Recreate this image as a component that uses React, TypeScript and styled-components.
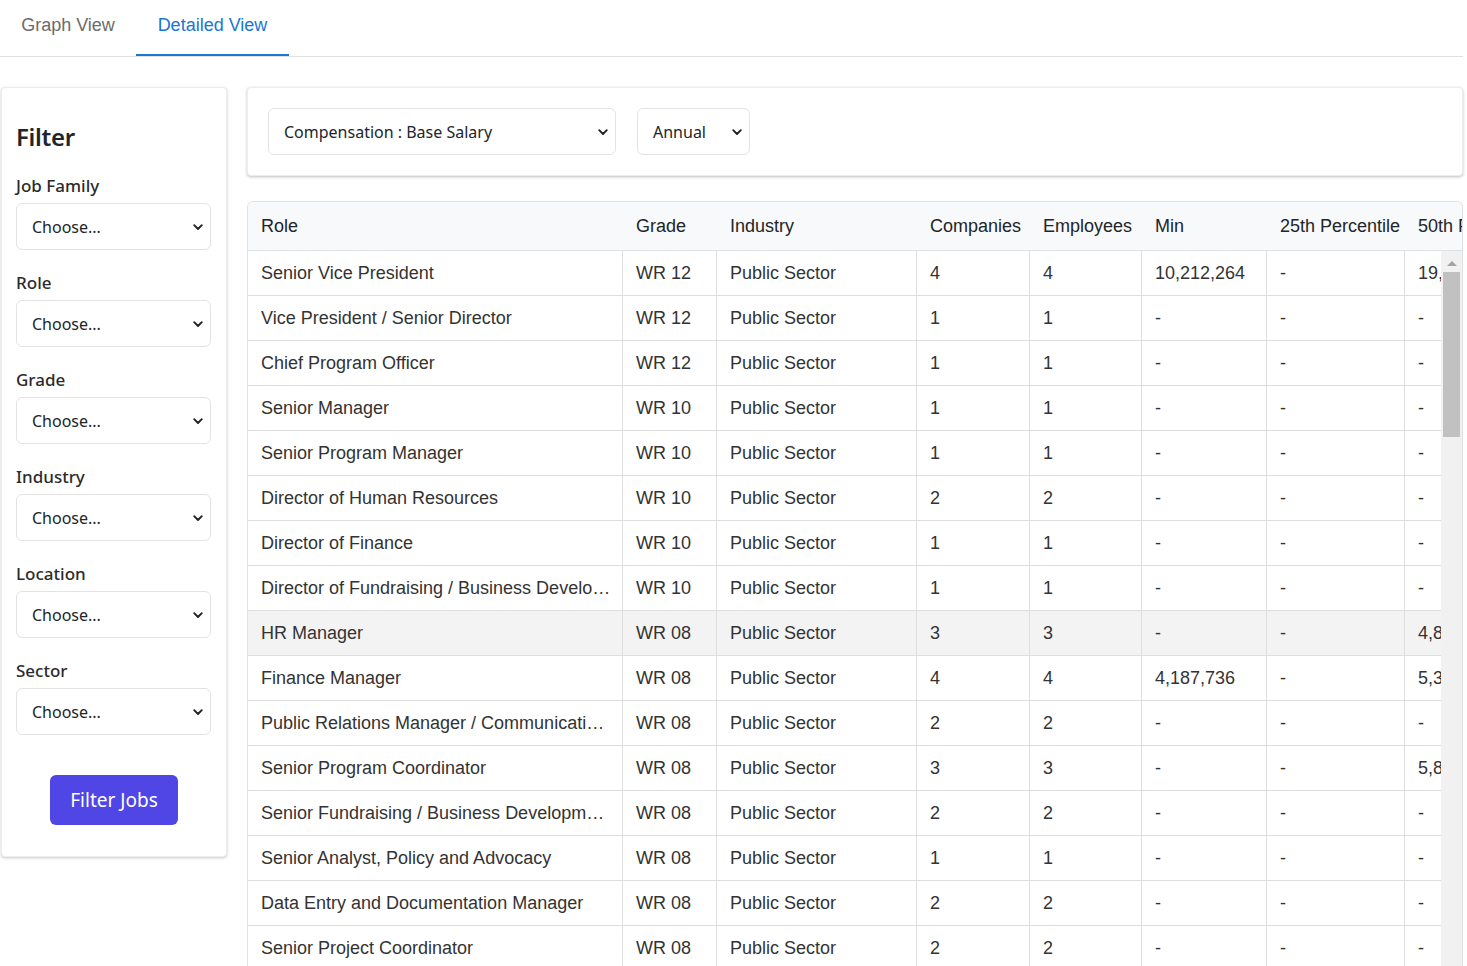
import React from 'react';
import styled, {createGlobalStyle} from 'styled-components';

const GlobalStyle = createGlobalStyle`
    * {
        box-sizing: border-box;
    }
    body {
        margin: 0;
        background: #FFFFFF;
        font-family: "Noto Sans", "Open Sans", sans-serif;
        color: #212529;
    }
`;

type Row = {
    role: string;
    grade: string;
    companies: number;
    employees: number;
    min: string;
    p25: string;
    p50: string;
};

const rows: Row[] = [
    {role: 'Senior Vice President', grade: 'WR 12', companies: 4, employees: 4, min: '10,212,264', p25: '-', p50: '19,650,480'},
    {role: 'Vice President / Senior Director', grade: 'WR 12', companies: 1, employees: 1, min: '-', p25: '-', p50: '-'},
    {role: 'Chief Program Officer', grade: 'WR 12', companies: 1, employees: 1, min: '-', p25: '-', p50: '-'},
    {role: 'Senior Manager', grade: 'WR 10', companies: 1, employees: 1, min: '-', p25: '-', p50: '-'},
    {role: 'Senior Program Manager', grade: 'WR 10', companies: 1, employees: 1, min: '-', p25: '-', p50: '-'},
    {role: 'Director of Human Resources', grade: 'WR 10', companies: 2, employees: 2, min: '-', p25: '-', p50: '-'},
    {role: 'Director of Finance', grade: 'WR 10', companies: 1, employees: 1, min: '-', p25: '-', p50: '-'},
    {role: 'Director of Fundraising / Business Development', grade: 'WR 10', companies: 1, employees: 1, min: '-', p25: '-', p50: '-'},
    {role: 'HR Manager', grade: 'WR 08', companies: 3, employees: 3, min: '-', p25: '-', p50: '4,850,000'},
    {role: 'Finance Manager', grade: 'WR 08', companies: 4, employees: 4, min: '4,187,736', p25: '-', p50: '5,312,400'},
    {role: 'Public Relations Manager / Communications Manager', grade: 'WR 08', companies: 2, employees: 2, min: '-', p25: '-', p50: '-'},
    {role: 'Senior Program Coordinator', grade: 'WR 08', companies: 3, employees: 3, min: '-', p25: '-', p50: '5,820,000'},
    {role: 'Senior Fundraising / Business Development Manager', grade: 'WR 08', companies: 2, employees: 2, min: '-', p25: '-', p50: '-'},
    {role: 'Senior Analyst, Policy and Advocacy', grade: 'WR 08', companies: 1, employees: 1, min: '-', p25: '-', p50: '-'},
    {role: 'Data Entry and Documentation Manager', grade: 'WR 08', companies: 2, employees: 2, min: '-', p25: '-', p50: '-'},
    {role: 'Senior Project Coordinator', grade: 'WR 08', companies: 2, employees: 2, min: '-', p25: '-', p50: '-'},
];

const columns = [
    {label: 'Role', width: 375},
    {label: 'Grade', width: 94},
    {label: 'Industry', width: 200},
    {label: 'Companies', width: 113},
    {label: 'Employees', width: 112},
    {label: 'Min', width: 125},
    {label: '25th Percentile', width: 138},
    {label: '50th Percentile', width: 140},
    {label: '75th Percentile', width: 140},
    {label: 'Max', width: 125},
];

const tableWidth = columns.reduce((sum, c) => sum + c.width, 0);

const Chevron = () => (
    <ChevronIcon viewBox="0 0 12 12" width="12" height="12">
        <path d="M2.2 4.2 L6 8 L9.8 4.2" fill="none" stroke="#222" strokeWidth="1.9" strokeLinecap="round"
              strokeLinejoin="round"/>
    </ChevronIcon>
);

const Select = ({value, width}: { value: string; width?: number }) => (
    <SelectBox $width={width}>
        <SelectText>{value}</SelectText>
        <Chevron/>
    </SelectBox>
);

const filters = ['Job Family', 'Role', 'Grade', 'Industry', 'Location', 'Sector'];

const ColGroup = () => (
    <colgroup>
        {columns.map(c => <col key={c.label} style={{width: c.width}}/>)}
    </colgroup>
);

const App = () => {
    return (
        <>
            <GlobalStyle/>
            <TabBar>
                <Tab>Graph View</Tab>
                <Tab $active>Detailed View</Tab>
            </TabBar>
            <Main>
                <Sidebar>
                    <Heading>Filter</Heading>
                    {filters.map(f => (
                        <Field key={f}>
                            <Label>{f}</Label>
                            <Select value="Choose..."/>
                        </Field>
                    ))}
                    <FilterButton>Filter Jobs</FilterButton>
                </Sidebar>
                <Content>
                    <Toolbar>
                        <Select value="Compensation : Base Salary" width={348}/>
                        <Select value="Annual" width={113}/>
                    </Toolbar>
                    <TableCard>
                        <HeadWrap>
                            <Table style={{width: tableWidth}}>
                                <ColGroup/>
                                <thead>
                                <tr>
                                    {columns.map(c => <Th key={c.label}>{c.label}</Th>)}
                                </tr>
                                </thead>
                            </Table>
                        </HeadWrap>
                        <BodyWrap>
                            <BodyScroll>
                                <Table style={{width: tableWidth}}>
                                    <ColGroup/>
                                    <tbody>
                                    {rows.map((r, i) => (
                                        <Tr key={i} $hover={i === 8}>
                                            <Td>{r.role}</Td>
                                            <Td>{r.grade}</Td>
                                            <Td>Public Sector</Td>
                                            <Td>{r.companies}</Td>
                                            <Td>{r.employees}</Td>
                                            <Td>{r.min}</Td>
                                            <Td>{r.p25}</Td>
                                            <Td>{r.p50}</Td>
                                            <Td>-</Td>
                                            <Td>-</Td>
                                        </Tr>
                                    ))}
                                    </tbody>
                                </Table>
                            </BodyScroll>
                            <ScrollTrack>
                                <ScrollArrow viewBox="0 0 10 6" width="10" height="6">
                                    <path d="M0 6 L5 1 L10 6 Z" fill="#A3A3A3"/>
                                </ScrollArrow>
                                <ScrollThumb/>
                            </ScrollTrack>
                        </BodyWrap>
                    </TableCard>
                </Content>
            </Main>
        </>
    );
};

export default App;

const TabBar = styled.div`
    display: flex;
    height: 57px;
    border-bottom: 1px solid #E0E0E0;
    margin-right: 4px;
`;

const Tab = styled.div<{ $active?: boolean }>`
    display: flex;
    align-items: center;
    justify-content: center;
    padding: 0 20px 4px;
    min-width: ${props => props.$active ? '153px' : '136px'};
    height: 56px;
    margin-bottom: -1px;
    font-family: "Liberation Sans", Arial, sans-serif;
    font-size: 18px;
    color: ${props => props.$active ? '#1976D2' : '#6B6B6B'};
    border-bottom: 2px solid ${props => props.$active ? '#1976D2' : 'transparent'};
`;

const Main = styled.div`
    display: flex;
    align-items: flex-start;
    gap: 20px;
    padding: 30px 4px 0 1px;
`;

const Sidebar = styled.div`
    display: flex;
    flex-direction: column;
    width: 226px;
    flex-shrink: 0;
    padding: 33px 15px 31px 14px;
    background: #FFFFFF;
    border: 1px solid #EDEDED;
    border-radius: 4px;
    box-shadow: 0 1px 3px rgba(0, 0, 0, 0.22);
`;

const Heading = styled.h2`
    margin: 0 0 20px;
    font-size: 24px;
    line-height: 32px;
    font-weight: 600;
    letter-spacing: -0.3px;
    color: #212529;
`;

const Field = styled.div`
    display: flex;
    flex-direction: column;
    gap: 5px;
    margin-bottom: 20px;
`;

const Label = styled.label`
    font-size: 17px;
    line-height: 25px;
    font-weight: 500;
    color: #2B2B2B;
`;

const SelectBox = styled.div<{ $width?: number }>`
    position: relative;
    display: flex;
    align-items: center;
    width: ${props => props.$width ? `${props.$width}px` : '100%'};
    height: 47px;
    padding: 0 30px 0 15px;
    background: #FFFFFF;
    border: 1px solid #E3E3E3;
    border-radius: 6px;
    flex-shrink: 0;
`;

const SelectText = styled.span`
    font-size: 16px;
    color: #212529;
    white-space: nowrap;
`;

const ChevronIcon = styled.svg`
    position: absolute;
    right: 6px;
    top: 50%;
    transform: translateY(-50%);
`;

const FilterButton = styled.button`
    align-self: center;
    width: 128px;
    height: 50px;
    margin-top: 20px;
    margin-left: 1px;
    border: none;
    border-radius: 6px;
    background: #4F46E5;
    color: #FFFFFF;
    font-family: "Noto Sans", "Open Sans", sans-serif;
    font-size: 19px;
    cursor: pointer;
`;

const Content = styled.div`
    flex: 1;
    min-width: 0;
    display: flex;
    flex-direction: column;
    gap: 25px;
`;

const Toolbar = styled.div`
    display: flex;
    align-items: center;
    gap: 21px;
    height: 89px;
    padding: 0 20px;
    background: #FFFFFF;
    border: 1px solid #EDEDED;
    border-radius: 4px;
    box-shadow: 0 1px 3px rgba(0, 0, 0, 0.25);
`;

const TableCard = styled.div`
    border: 1px solid #DEE2E6;
    border-bottom: none;
    border-radius: 6px 6px 0 0;
    overflow: hidden;
    background: #FFFFFF;
`;

const HeadWrap = styled.div`
    overflow: hidden;
    background: #F8F9FA;
    border-bottom: 1px solid #DEE2E6;
`;

const BodyWrap = styled.div`
    display: flex;
    height: 716px;
`;

const BodyScroll = styled.div`
    flex: 1;
    min-width: 0;
    overflow: hidden;
`;

const ScrollTrack = styled.div`
    display: flex;
    flex-direction: column;
    align-items: center;
    width: 21px;
    flex-shrink: 0;
    background: #F1F1F1;
`;

const ScrollArrow = styled.svg`
    margin: 9px 0 6px;
`;

const ScrollThumb = styled.div`
    width: 17px;
    height: 165px;
    background: #C1C1C1;
`;

const Table = styled.table`
    table-layout: fixed;
    border-collapse: separate;
    border-spacing: 0;
    font-family: "Liberation Sans", Arial, sans-serif;
    font-size: 18px;
`;

const Th = styled.th`
    height: 48px;
    padding: 0 13px;
    text-align: left;
    font-weight: 400;
    color: #212529;
    white-space: nowrap;
    overflow: hidden;
`;

const Tr = styled.tr<{ $hover?: boolean }>`
    background: ${props => props.$hover ? '#F3F3F3' : '#FFFFFF'};
`;

const Td = styled.td`
    height: 45px;
    padding: 0 8px 0 13px;
    color: #333333;
    border-right: 1px solid #DEDEDE;
    border-bottom: 1px solid #DEDEDE;
    white-space: nowrap;
    overflow: hidden;
    text-overflow: ellipsis;
`;
